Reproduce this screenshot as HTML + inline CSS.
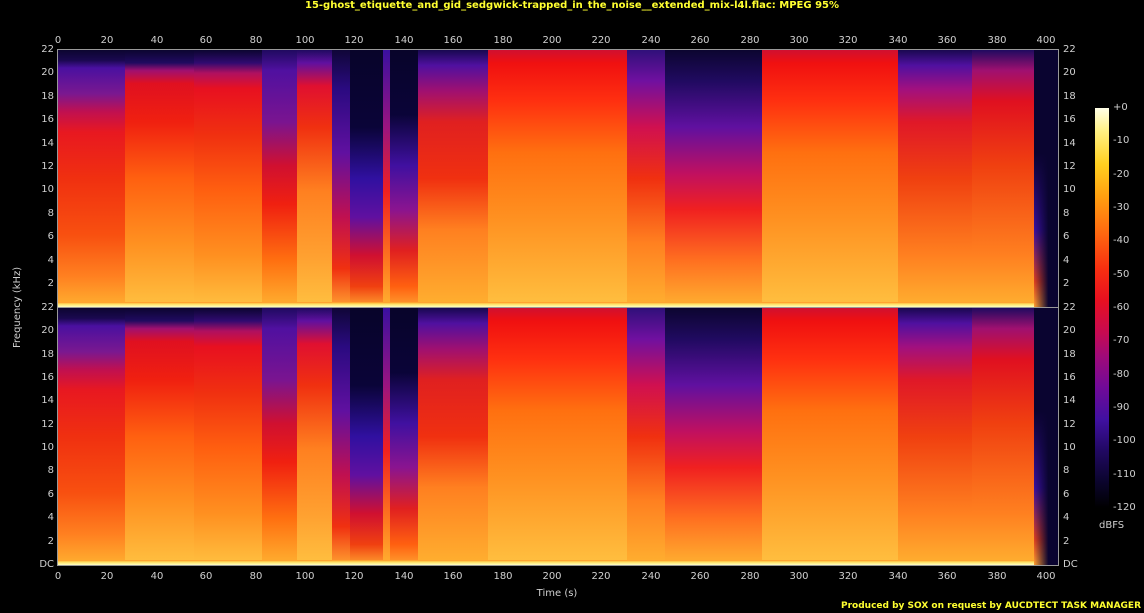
<!DOCTYPE html>
<html><head><meta charset="utf-8"><style>
body{margin:0;background:#000;width:1144px;height:613px;overflow:hidden;position:relative;font-family:"DejaVu Sans","Liberation Sans",sans-serif;}
.t{position:absolute;color:#d0d0d0;font-size:10px;white-space:nowrap;line-height:12px}
.xc{transform:translateX(-50%)}
.yl{transform:translateY(-50%);text-align:right;width:30px}
.yr{transform:translateY(-50%)}
.ch{position:absolute;left:58px;width:1000px;display:flex}
.ch div{height:100%}
.ch .bl{position:absolute;left:0;right:24px;bottom:0;height:5px;background:linear-gradient(#ff9020,#ffe060 40%,#ffffc0)}
.A{width:67px;background:linear-gradient(#0c0530 0%,#1a0850 4%,#4a10a0 7%,#7a1890 17%,#c01050 24%,#e81820 32%,#f03010 50%,#f85010 72%,#ff8020 88%,#ffb030 100%)}
.B{width:69px;background:linear-gradient(#0c0530 0,#200a60 5%,#a01070 8%,#e01020 13%,#f02010 28%,#ff6010 50%,#ff9020 75%,#ffc040 100%)}
.C{width:68px;background:linear-gradient(#0c0530 0,#300a70 5%,#b01060 9%,#e81020 15%,#f03010 33%,#ff6010 55%,#ff9020 80%,#ffc040 100%)}
.D{width:35px;background:linear-gradient(#200a60 0,#5010a0 8%,#7a1490 28%,#d01030 45%,#f02010 60%,#ff7010 82%,#ffb030 100%)}
.E{width:35px;background:linear-gradient(#200a60 0,#6010a0 5%,#e01030 14%,#f03010 30%,#ff8020 55%,#ffa030 80%,#ffc040 100%)}
.F{width:18px;background:linear-gradient(#100638 0,#2a0a80 15%,#6010a0 40%,#c01050 65%,#f03010 85%,#ffa030 100%)}
.G{width:33px;background:linear-gradient(#08042a 0,#0a0438 30%,#3010a0 50%,#6010a0 65%,#d01030 80%,#f04010 92%,#ffa030 100%)}
.G2{width:7px;background:linear-gradient(#3a10a0 0,#9a1480 30%,#f02020 55%,#ff8020 85%,#ffb030 100%)}
.G3{width:28px;background:linear-gradient(#08042a 0,#0a0438 25%,#4010a0 45%,#8a1490 62%,#e02020 78%,#ff6010 92%,#ffa030 100%)}
.H{width:70px;background:linear-gradient(#180850 0,#5010a0 6%,#a01070 16%,#e02020 28%,#f03010 50%,#ff8020 70%,#ffb030 100%)}
.I{width:52px;background:linear-gradient(#d01030 0,#f01010 5%,#ff3010 20%,#ff7010 40%,#ff9020 65%,#ffc040 100%)}
.J{width:87px;background:linear-gradient(#d01030 0,#f01010 5%,#ff3010 20%,#ff7010 40%,#ff9020 65%,#ffc040 100%)}
.K{width:38px;background:linear-gradient(#30107a 0,#7010a0 12%,#d01050 30%,#f03010 50%,#ff8020 75%,#ffb030 100%)}
.L{width:97px;background:linear-gradient(#0c0530 0,#200a60 12%,#6010a0 30%,#c01060 48%,#f02020 62%,#ff7020 82%,#ffb030 100%)}
.M{width:136px;background:linear-gradient(#d01030 0,#f01010 5%,#ff3010 20%,#ff7010 40%,#ff9020 65%,#ffc040 100%)}
.N{width:74px;background:linear-gradient(#1a0850 0,#5010a0 6%,#a01080 15%,#e01828 28%,#f04010 50%,#ff8020 80%,#ffb030 100%)}
.O{width:62px;background:linear-gradient(#200a60 0,#a01070 8%,#e01020 20%,#f04010 45%,#ff8020 80%,#ffb030 100%)}
.P{width:24px;background:linear-gradient(90deg,rgba(10,4,48,0),#0a0430 60%),linear-gradient(#0a0430 0,#0a0430 40%,#3a10a0 70%,#e04020 90%,#ffa030 100%)}
</style></head><body>
<div class="t xc" style="left:572px;top:0;color:#ffff30;font-weight:bold;font-size:10px">15-ghost_etiquette_and_gid_sedgwick-trapped_in_the_noise__extended_mix-l4l.flac: MPEG 95%</div>

<div class="ch" style="top:50px;height:257px"><div class="A"></div><div class="B"></div><div class="C"></div><div class="D"></div><div class="E"></div><div class="F"></div><div class="G"></div><div class="G2"></div><div class="G3"></div><div class="H"></div><div class="I"></div><div class="J"></div><div class="K"></div><div class="L"></div><div class="M"></div><div class="N"></div><div class="O"></div><div class="P"></div><div class="bl"></div></div>
<div class="ch" style="top:308px;height:257px"><div class="A"></div><div class="B"></div><div class="C"></div><div class="D"></div><div class="E"></div><div class="F"></div><div class="G"></div><div class="G2"></div><div class="G3"></div><div class="H"></div><div class="I"></div><div class="J"></div><div class="K"></div><div class="L"></div><div class="M"></div><div class="N"></div><div class="O"></div><div class="P"></div><div class="bl"></div></div>
<div style="position:absolute;left:57px;top:49px;width:1000px;height:515px;border:1px solid #999"></div>
<div style="position:absolute;left:57px;top:307px;width:1002px;height:1px;background:#999"></div>

<div class="t xc" style="left:58px;top:35px">0</div><div class="t xc" style="left:107px;top:35px">20</div><div class="t xc" style="left:157px;top:35px">40</div><div class="t xc" style="left:206px;top:35px">60</div><div class="t xc" style="left:256px;top:35px">80</div><div class="t xc" style="left:305px;top:35px">100</div><div class="t xc" style="left:354px;top:35px">120</div><div class="t xc" style="left:404px;top:35px">140</div><div class="t xc" style="left:453px;top:35px">160</div><div class="t xc" style="left:503px;top:35px">180</div><div class="t xc" style="left:552px;top:35px">200</div><div class="t xc" style="left:601px;top:35px">220</div><div class="t xc" style="left:651px;top:35px">240</div><div class="t xc" style="left:700px;top:35px">260</div><div class="t xc" style="left:750px;top:35px">280</div><div class="t xc" style="left:799px;top:35px">300</div><div class="t xc" style="left:848px;top:35px">320</div><div class="t xc" style="left:898px;top:35px">340</div><div class="t xc" style="left:947px;top:35px">360</div><div class="t xc" style="left:997px;top:35px">380</div><div class="t xc" style="left:1046px;top:35px">400</div>

<div class="t xc" style="left:58px;top:571px">0</div><div class="t xc" style="left:107px;top:571px">20</div><div class="t xc" style="left:157px;top:571px">40</div><div class="t xc" style="left:206px;top:571px">60</div><div class="t xc" style="left:256px;top:571px">80</div><div class="t xc" style="left:305px;top:571px">100</div><div class="t xc" style="left:354px;top:571px">120</div><div class="t xc" style="left:404px;top:571px">140</div><div class="t xc" style="left:453px;top:571px">160</div><div class="t xc" style="left:503px;top:571px">180</div><div class="t xc" style="left:552px;top:571px">200</div><div class="t xc" style="left:601px;top:571px">220</div><div class="t xc" style="left:651px;top:571px">240</div><div class="t xc" style="left:700px;top:571px">260</div><div class="t xc" style="left:750px;top:571px">280</div><div class="t xc" style="left:799px;top:571px">300</div><div class="t xc" style="left:848px;top:571px">320</div><div class="t xc" style="left:898px;top:571px">340</div><div class="t xc" style="left:947px;top:571px">360</div><div class="t xc" style="left:997px;top:571px">380</div><div class="t xc" style="left:1046px;top:571px">400</div>
<div class="t xc" style="left:557px;top:588px">Time (s)</div>

<div class="t yl" style="left:24px;top:50px">22</div><div class="t yl" style="left:24px;top:73px">20</div><div class="t yl" style="left:24px;top:97px">18</div><div class="t yl" style="left:24px;top:120px">16</div><div class="t yl" style="left:24px;top:144px">14</div><div class="t yl" style="left:24px;top:167px">12</div><div class="t yl" style="left:24px;top:190px">10</div><div class="t yl" style="left:24px;top:214px">8</div><div class="t yl" style="left:24px;top:237px">6</div><div class="t yl" style="left:24px;top:261px">4</div><div class="t yl" style="left:24px;top:284px">2</div>
<div class="t yl" style="left:24px;top:308px">22</div><div class="t yl" style="left:24px;top:331px">20</div><div class="t yl" style="left:24px;top:355px">18</div><div class="t yl" style="left:24px;top:378px">16</div><div class="t yl" style="left:24px;top:401px">14</div><div class="t yl" style="left:24px;top:425px">12</div><div class="t yl" style="left:24px;top:448px">10</div><div class="t yl" style="left:24px;top:471px">8</div><div class="t yl" style="left:24px;top:495px">6</div><div class="t yl" style="left:24px;top:518px">4</div><div class="t yl" style="left:24px;top:542px">2</div><div class="t yl" style="left:24px;top:565px">DC</div>

<div class="t yr" style="left:1063px;top:50px">22</div><div class="t yr" style="left:1063px;top:73px">20</div><div class="t yr" style="left:1063px;top:97px">18</div><div class="t yr" style="left:1063px;top:120px">16</div><div class="t yr" style="left:1063px;top:144px">14</div><div class="t yr" style="left:1063px;top:167px">12</div><div class="t yr" style="left:1063px;top:190px">10</div><div class="t yr" style="left:1063px;top:214px">8</div><div class="t yr" style="left:1063px;top:237px">6</div><div class="t yr" style="left:1063px;top:261px">4</div><div class="t yr" style="left:1063px;top:284px">2</div>
<div class="t yr" style="left:1063px;top:308px">22</div><div class="t yr" style="left:1063px;top:331px">20</div><div class="t yr" style="left:1063px;top:355px">18</div><div class="t yr" style="left:1063px;top:378px">16</div><div class="t yr" style="left:1063px;top:401px">14</div><div class="t yr" style="left:1063px;top:425px">12</div><div class="t yr" style="left:1063px;top:448px">10</div><div class="t yr" style="left:1063px;top:471px">8</div><div class="t yr" style="left:1063px;top:495px">6</div><div class="t yr" style="left:1063px;top:518px">4</div><div class="t yr" style="left:1063px;top:542px">2</div><div class="t yr" style="left:1063px;top:565px">DC</div>

<div class="t" style="left:-22px;top:308px;transform:translate(0,-50%) rotate(-90deg);transform-origin:center;width:80px;text-align:center">Frequency (kHz)</div>

<div style="position:absolute;left:1095px;top:108px;width:14px;height:400px;background:linear-gradient(#ffffe8 0%,#fff080 6%,#ffd020 14%,#ffa010 22%,#ff7010 30%,#f83010 40%,#e81020 48%,#c80a50 56%,#a00a78 62%,#700a98 70%,#4010a0 78%,#200860 86%,#0c0530 93%,#000 100%)"></div>
<div class="t yr" style="left:1113px;top:108px">+0</div><div class="t yr" style="left:1113px;top:141px">-10</div><div class="t yr" style="left:1113px;top:175px">-20</div><div class="t yr" style="left:1113px;top:208px">-30</div><div class="t yr" style="left:1113px;top:241px">-40</div><div class="t yr" style="left:1113px;top:275px">-50</div><div class="t yr" style="left:1113px;top:308px">-60</div><div class="t yr" style="left:1113px;top:341px">-70</div><div class="t yr" style="left:1113px;top:375px">-80</div><div class="t yr" style="left:1113px;top:408px">-90</div><div class="t yr" style="left:1113px;top:441px">-100</div><div class="t yr" style="left:1113px;top:475px">-110</div><div class="t yr" style="left:1113px;top:508px">-120</div>
<div class="t" style="left:1099px;top:520px">dBFS</div>

<div class="t" style="right:3px;top:600px;color:#ffff30;font-weight:bold;font-size:9px">Produced by SOX on request by AUCDTECT TASK MANAGER</div>
</body></html>
